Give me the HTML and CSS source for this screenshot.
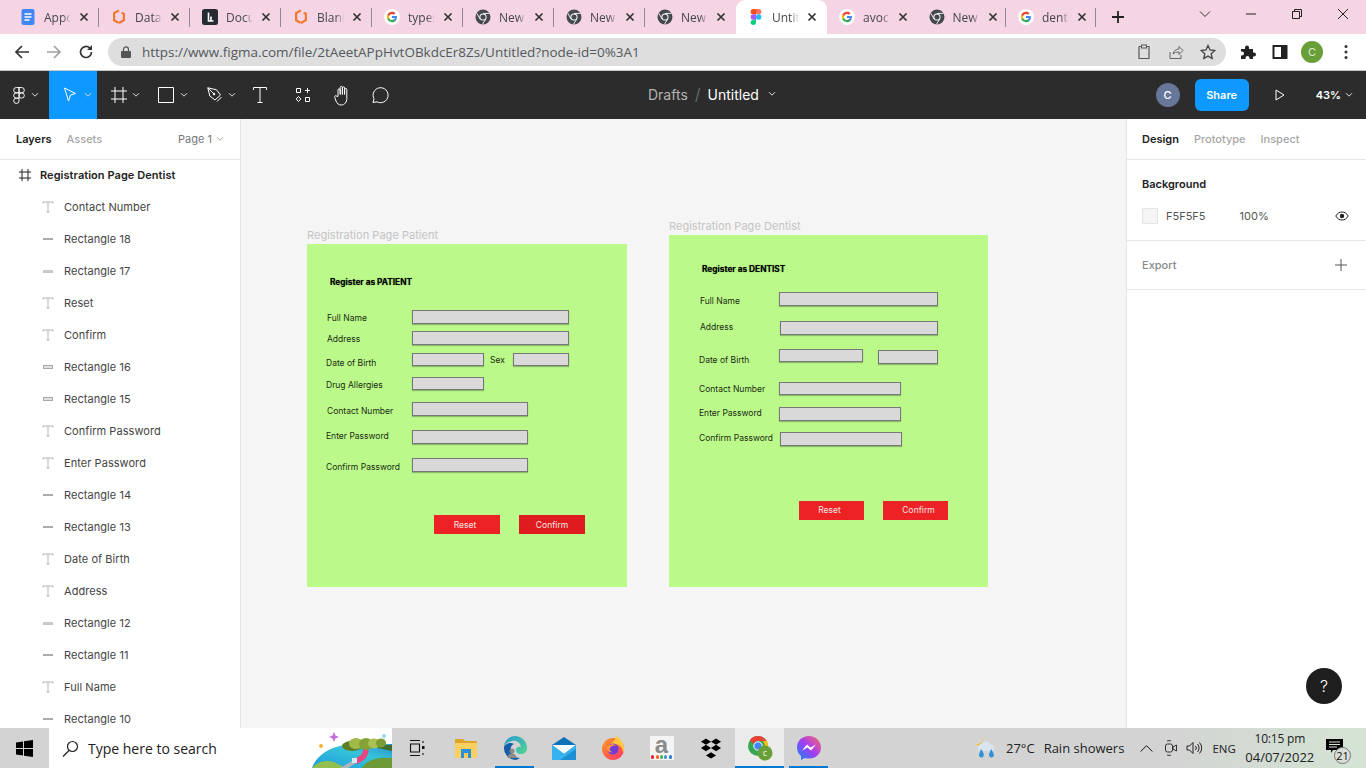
FILE: index.html
```html
<!DOCTYPE html>
<html lang="en">
<head>
    <meta charset="UTF-8">
    <title>Untitled – Figma</title>
    <link rel="stylesheet" href="styles.css">
</head>
<body>
    <svg class="icon-defs" width="0" height="0">
        <symbol id="i-close" viewBox="0 0 10 10"><path d="M1.5 1.5l7 7M8.5 1.5l-7 7" stroke="#333" stroke-width="1.7" fill="none"/></symbol>
        <symbol id="i-chev" viewBox="0 0 8 6"><path d="M1 1.2l3 3 3-3" stroke="currentColor" stroke-width="1" fill="none"/></symbol>
        <symbol id="i-google" viewBox="0 0 24 24">
            <circle cx="12" cy="12" r="12" fill="#fff"/>
            <g transform="translate(3.6 3.6) scale(.7)">
                <path fill="#4285f4" d="M22.56 12.25c0-.78-.07-1.53-.2-2.25H12v4.26h5.92c-.26 1.37-1.04 2.53-2.21 3.31v2.77h3.57c2.08-1.92 3.28-4.74 3.28-8.09z"/>
                <path fill="#34a853" d="M12 23c2.97 0 5.46-.98 7.28-2.66l-3.57-2.77c-.98.66-2.23 1.06-3.71 1.06-2.86 0-5.29-1.93-6.16-4.53H2.18v2.84C3.99 20.53 7.7 23 12 23z"/>
                <path fill="#fbbc05" d="M5.84 14.09c-.22-.66-.35-1.36-.35-2.09s.13-1.43.35-2.09V7.07H2.18C1.43 8.55 1 10.22 1 12s.43 3.45 1.18 4.93l3.66-2.84z"/>
                <path fill="#ea4335" d="M12 5.38c1.62 0 3.06.56 4.21 1.64l3.15-3.15C17.45 2.09 14.97 1 12 1 7.7 1 3.99 3.47 2.18 7.07l3.66 2.84c.87-2.6 3.3-4.53 6.16-4.53z"/>
            </g>
        </symbol>
        <symbol id="i-chromium" viewBox="0 0 16 16">
            <circle cx="8" cy="8" r="7.5" fill="#45484c"/>
            <circle cx="8" cy="8" r="3.6" fill="#fff"/>
            <circle cx="8" cy="8" r="2.6" fill="#45484c"/>
            <path d="M8 4.4h6.4M5 10l-3-5.6M10.6 10.4l-3.2 5" stroke="#fff" stroke-width=".9"/>
        </symbol>
        <symbol id="i-hex" viewBox="0 0 16 18">
            <path d="M8 1.500L2.500 4.700v8l5 3M8 15.700l5.500-3.200V5.500L11 4" stroke="#f4752b" stroke-width="2.400" fill="none"/>
        </symbol>
        <symbol id="i-t" viewBox="0 0 12 12"><path d="M1 2.400V1h10v1.400M6 1v10M4.400 11h3.200" stroke="#b3b3b3" stroke-width="1" fill="none"/></symbol>
    </svg>

    <!-- browser tabs -->
    <div class="tab-strip">
        <div class="tab">
            <svg class="fav" viewBox="0 0 16 16"><rect x="1.500" width="13" height="16" rx="2" fill="#4285f4"/><path d="M4.500 5h7M4.500 8h7M4.500 11h5" stroke="#fff" stroke-width="1.400"/></svg>
            <span class="tab-title">Appo</span><svg class="tab-x"><use href="#i-close"/></svg>
        </div>
        <div class="tab">
            <svg class="fav"><use href="#i-hex"/></svg>
            <span class="tab-title">Data</span><svg class="tab-x"><use href="#i-close"/></svg>
        </div>
        <div class="tab">
            <svg class="fav" viewBox="0 0 16 16"><rect width="16" height="16" rx="2.500" fill="#262a33"/><path d="M6.500 3.500v8.500h5M9 7.500v4.500" stroke="#fff" stroke-width="1.600" fill="none"/></svg>
            <span class="tab-title">Docu</span><svg class="tab-x"><use href="#i-close"/></svg>
        </div>
        <div class="tab">
            <svg class="fav"><use href="#i-hex"/></svg>
            <span class="tab-title">Blank</span><svg class="tab-x"><use href="#i-close"/></svg>
        </div>
        <div class="tab">
            <svg class="fav"><use href="#i-google"/></svg>
            <span class="tab-title">types</span><svg class="tab-x"><use href="#i-close"/></svg>
        </div>
        <div class="tab">
            <svg class="fav"><use href="#i-chromium"/></svg>
            <span class="tab-title">New</span><svg class="tab-x"><use href="#i-close"/></svg>
        </div>
        <div class="tab">
            <svg class="fav"><use href="#i-chromium"/></svg>
            <span class="tab-title">New</span><svg class="tab-x"><use href="#i-close"/></svg>
        </div>
        <div class="tab tab-before-active">
            <svg class="fav"><use href="#i-chromium"/></svg>
            <span class="tab-title">New</span><svg class="tab-x"><use href="#i-close"/></svg>
        </div>
        <div class="tab tab-active">
            <svg class="fav" viewBox="0 0 16 24">
                <path fill="#f24e1e" d="M4 0h4v8H4a4 4 0 0 1 0-8z"/>
                <path fill="#ff7262" d="M8 0h4a4 4 0 0 1 0 8H8z"/>
                <path fill="#a259ff" d="M4 8h4v8H4a4 4 0 0 1 0-8z"/>
                <circle fill="#1abcfe" cx="12" cy="12" r="4"/>
                <path fill="#0acf83" d="M4 16h4v4a4 4 0 1 1-4-4z"/>
            </svg>
            <span class="tab-title">Untit</span><svg class="tab-x"><use href="#i-close"/></svg>
        </div>
        <div class="tab tab-narrow">
            <svg class="fav"><use href="#i-google"/></svg>
            <span class="tab-title">avoc</span><svg class="tab-x"><use href="#i-close"/></svg>
        </div>
        <div class="tab tab-narrow">
            <svg class="fav"><use href="#i-chromium"/></svg>
            <span class="tab-title">New</span><svg class="tab-x"><use href="#i-close"/></svg>
        </div>
        <div class="tab tab-narrow">
            <svg class="fav"><use href="#i-google"/></svg>
            <span class="tab-title">denti</span><svg class="tab-x"><use href="#i-close"/></svg>
        </div>
        <svg class="new-tab" viewBox="0 0 14 14"><path d="M7 1v12M1 7h12" stroke="#222" stroke-width="1.800"/></svg>
        <div class="win-controls">
            <svg viewBox="0 0 12 12"><path d="M1 3.500l5 5 5-5" stroke="#333" fill="none"/></svg>
            <svg viewBox="0 0 12 12"><path d="M1 6h10" stroke="#222"/></svg>
            <svg viewBox="0 0 12 12"><path d="M1.500 3.500h7v7h-7zM3.500 3.500v-2h7v7h-2" stroke="#222" fill="none"/></svg>
            <svg viewBox="0 0 12 12"><path d="M1 1l10 10M11 1L1 11" stroke="#222" fill="none"/></svg>
        </div>
    </div>

    <!-- address bar -->
    <div class="nav-bar">
        <svg class="nav-btn" viewBox="0 0 16 16"><path d="M15 8H2M8 2L2 8l6 6" stroke="#333" stroke-width="1.700" fill="none"/></svg>
        <svg class="nav-btn" viewBox="0 0 16 16"><path d="M1 8h13M8 2l6 6-6 6" stroke="#a0a0a0" stroke-width="1.700" fill="none"/></svg>
        <svg class="nav-btn" viewBox="0 0 16 16"><path d="M13.500 8A5.500 5.500 0 1 1 11.800 4" stroke="#333" stroke-width="1.700" fill="none"/><path d="M14 1v5H9z" fill="#333"/></svg>
        <div class="omnibox">
            <svg class="lock" viewBox="0 0 10 12"><path d="M2.500 5V3.400a2.500 2.500 0 0 1 5 0V5" stroke="#555" stroke-width="1.200" fill="none"/><rect y="5" width="10" height="7" rx="1" fill="#555"/></svg>
            <span class="url">https://www.figma.com/file/2tAeetAPpHvtOBkdcEr8Zs/Untitled?node-id=0%3A1</span>
            <svg class="omni-icon" viewBox="0 0 16 16"><path d="M3 2.500h2.500M10.500 2.500H13v12H3v-12" stroke="#555" stroke-width="1.200" fill="none"/><rect x="5.500" y="1" width="5" height="3" fill="#dedede" stroke="#555"/></svg>
            <svg class="omni-icon" viewBox="0 0 16 16"><path d="M2 8v6.500h11V11M5 10c.5-3 3-5 6-5V2.500L15 6.500l-4 4V8c-2.500 0-4.500.5-6 2z" stroke="#666" fill="none"/></svg>
            <svg class="omni-icon omni-star" viewBox="0 0 16 16"><path d="M8 1.500l2 4.500 4.800.5-3.600 3.200 1 4.800L8 12.100l-4.200 2.400 1-4.800L1.200 6.500 6 6z" stroke="#444" stroke-width="1.300" fill="none"/></svg>
        </div>
        <svg class="ext-icon" viewBox="0 0 16 16"><path d="M1 5h4V3.500a2 2 0 0 1 4 0V5h4v3.500h1a2 2 0 0 1 0 4h-1V15H9.500v-1a2 2 0 0 0-4 0v1H1v-3.500h1a2 2 0 0 0 0-4H1z" fill="#222"/></svg>
        <svg class="ext-icon ext-panel" viewBox="0 0 16 16"><path d="M1.500 2h13v12h-13z" fill="none" stroke="#222" stroke-width="2"/><path d="M9 2h6v12H9z" fill="#222"/></svg>
        <span class="chrome-avatar">C</span>
        <svg class="chrome-menu" viewBox="0 0 4 16"><circle cx="2" cy="2.500" r="1.500"/><circle cx="2" cy="8" r="1.500"/><circle cx="2" cy="13.500" r="1.500"/></svg>
    </div>

    <!-- figma toolbar -->
    <header class="fig-toolbar">
        <div class="tool tool-menu">
            <svg width="12" height="17" viewBox="0 0 11 16"><g fill="none" stroke="#fff" stroke-width=".9"><path d="M3 .5h2.500v5H3a2.500 2.500 0 0 1 0-5zM5.500 .5H8a2.500 2.500 0 0 1 0 5H5.500zM3 5.500h2.500v5H3a2.500 2.500 0 0 1 0-5z"/><circle cx="8" cy="8" r="2.500"/><path d="M3 10.500h2.500V13A2.500 2.500 0 1 1 3 10.500z"/></g></svg>
            <svg class="t-chev"><use href="#i-chev"/></svg>
        </div>
        <div class="tool tool-select">
            <svg width="14" height="16" viewBox="0 0 14 16"><path d="M1.500 1l11 5.500-5 1.500-2 6z" fill="none" stroke="#fff"/></svg>
            <svg class="t-chev"><use href="#i-chev"/></svg>
        </div>
        <div class="tool tool-frame">
            <svg width="16" height="16" viewBox="0 0 16 16"><path d="M4 0v16M12 0v16M0 4h16M0 12h16" stroke="#fff" fill="none"/></svg>
            <svg class="t-chev"><use href="#i-chev"/></svg>
        </div>
        <div class="tool tool-rect">
            <svg width="16" height="16" viewBox="0 0 16 16"><path d="M.5 .5h15v15H.5z" stroke="#fff" fill="none"/></svg>
            <svg class="t-chev"><use href="#i-chev"/></svg>
        </div>
        <div class="tool tool-pen">
            <svg width="16" height="16" viewBox="0 0 16 16"><path d="M.8 .8l8.700 2 4 5.200-5.500 5-5.200-4zM.8 .8l5.500 5.500M10 14.500l4.500-4.500" stroke="#fff" fill="none"/><circle cx="7" cy="7" r="1.200" fill="#fff"/></svg>
            <svg class="t-chev"><use href="#i-chev"/></svg>
        </div>
        <div class="tool tool-single tool-text">
            <svg width="14" height="16" viewBox="0 0 14 16"><path d="M.5 3V.5h13V3M7 .5v15M4.500 15.500h5" stroke="#fff" fill="none"/></svg>
        </div>
        <div class="tool tool-single tool-res">
            <svg width="14" height="14" viewBox="0 0 14 14"><path d="M.5 .5h4v4h-4zM9.500 9.500h4v4h-4zM11.500 0v5M9 2.500h5M2.500 8.500l2.300 2.500-2.300 2.500L.2 11z" stroke="#fff" fill="none"/></svg>
        </div>
        <div class="tool tool-single tool-hand">
            <svg width="18" height="21" viewBox="0 0 18 20"><path d="M4 11V4.500a1 1 0 0 1 2.200 0V9 2a1 1 0 0 1 2.200 0v7-6.500a1 1 0 0 1 2.200 0V9 4a1 1 0 0 1 2.200 0v9c0 3.500-2 6.500-5.500 6.500-3 0-4-1.500-5.300-4L.8 12c-.7-1.500 1-2.500 2-1.300z" stroke="#fff" fill="none"/></svg>
        </div>
        <div class="tool tool-single tool-comment">
            <svg width="18" height="18" viewBox="0 0 18 18"><path d="M2 16.500l1-3.700A7.500 7.500 0 1 1 6 15.800z" stroke="#fff" fill="none"/></svg>
        </div>
        <div class="doc-title">
            <span class="doc-folder">Drafts</span><span class="doc-slash">/</span><span class="doc-name">Untitled</span>
            <svg class="t-chev"><use href="#i-chev"/></svg>
        </div>
        <span class="fig-avatar">C</span>
        <button class="share-btn">Share</button>
        <svg class="play-btn" width="10" height="12" viewBox="0 0 10 12"><path d="M1 1l8 5-8 5z" stroke="#fff" fill="none"/></svg>
        <span class="zoom-val">43%</span>
        <svg class="t-chev zoom-chev"><use href="#i-chev"/></svg>
    </header>

    <div class="workspace">
        <!-- layers panel -->
        <aside class="left-panel">
            <div class="panel-tabs">
                <span class="ptab ptab-on">Layers</span>
                <span class="ptab">Assets</span>
                <span class="page-pick">Page 1<svg><use href="#i-chev"/></svg></span>
            </div>
            <div class="layer layer-frame">
                <svg width="12" height="12" viewBox="0 0 12 12"><path d="M3 0v12M9 0v12M0 3h12M0 9h12" stroke="#222" fill="none"/></svg>
                <span>Registration Page Dentist</span>
            </div>
            <div class="layer"><svg class="l-ic"><use href="#i-t"/></svg><span>Contact Number</span></div>
            <div class="layer"><i class="shape s-line"></i><span>Rectangle 18</span></div>
            <div class="layer"><i class="shape s-thick"></i><span>Rectangle 17</span></div>
            <div class="layer"><svg class="l-ic"><use href="#i-t"/></svg><span>Reset</span></div>
            <div class="layer"><svg class="l-ic"><use href="#i-t"/></svg><span>Confirm</span></div>
            <div class="layer"><i class="shape s-box"></i><span>Rectangle 16</span></div>
            <div class="layer"><i class="shape s-box"></i><span>Rectangle 15</span></div>
            <div class="layer"><svg class="l-ic"><use href="#i-t"/></svg><span>Confirm Password</span></div>
            <div class="layer"><svg class="l-ic"><use href="#i-t"/></svg><span>Enter Password</span></div>
            <div class="layer"><i class="shape s-line"></i><span>Rectangle 14</span></div>
            <div class="layer"><i class="shape s-line"></i><span>Rectangle 13</span></div>
            <div class="layer"><svg class="l-ic"><use href="#i-t"/></svg><span>Date of Birth</span></div>
            <div class="layer"><svg class="l-ic"><use href="#i-t"/></svg><span>Address</span></div>
            <div class="layer"><i class="shape s-thick"></i><span>Rectangle 12</span></div>
            <div class="layer"><i class="shape s-line"></i><span>Rectangle 11</span></div>
            <div class="layer"><svg class="l-ic"><use href="#i-t"/></svg><span>Full Name</span></div>
            <div class="layer"><i class="shape s-line"></i><span>Rectangle 10</span></div>
        </aside>

        <!-- canvas, frames sit at their free positions -->
        <main class="canvas">
            <div class="frame-label patient-label">Registration Page Patient</div>
            <section class="frame patient">
                <div class="frm-head ph">Register as PATIENT</div>
                <div class="frm-text p1">Full Name</div><div class="fld pf1"></div>
                <div class="frm-text p2">Address</div><div class="fld pf2"></div>
                <div class="frm-text p3">Date of Birth</div><div class="fld pf3"></div>
                <div class="frm-text p4">Sex</div><div class="fld pf4"></div>
                <div class="frm-text p5">Drug Allergies</div><div class="fld pf5"></div>
                <div class="frm-text p6">Contact Number</div><div class="fld pf6"></div>
                <div class="frm-text p7">Enter Password</div><div class="fld pf7"></div>
                <div class="frm-text p8">Confirm Password</div><div class="fld pf8"></div>
                <div class="frm-btn pb1">Reset</div>
                <div class="frm-btn pb2">Confirm</div>
            </section>

            <div class="frame-label dentist-label">Registration Page Dentist</div>
            <section class="frame dentist">
                <div class="frm-head dh">Register as DENTIST</div>
                <div class="frm-text d1">Full Name</div><div class="fld df1"></div>
                <div class="frm-text d2">Address</div><div class="fld df2"></div>
                <div class="frm-text d3">Date of Birth</div><div class="fld df3"></div><div class="fld df4"></div>
                <div class="frm-text d5">Contact Number</div><div class="fld df5"></div>
                <div class="frm-text d6">Enter Password</div><div class="fld df6"></div>
                <div class="frm-text d7">Confirm Password</div><div class="fld df7"></div>
                <div class="frm-btn db1">Reset</div>
                <div class="frm-btn db2">Confirm</div>
            </section>

            <div class="help-btn">?</div>
        </main>

        <!-- design panel -->
        <aside class="right-panel">
            <div class="panel-tabs">
                <span class="ptab ptab-on">Design</span>
                <span class="ptab">Prototype</span>
                <span class="ptab">Inspect</span>
            </div>
            <div class="bg-section">
                <div class="sec-title">Background</div>
                <div class="bg-row">
                    <i class="swatch"></i>
                    <span class="bg-hex">F5F5F5</span>
                    <span class="bg-pct">100%</span>
                    <svg class="eye" width="14" height="10" viewBox="0 0 14 10"><path d="M.8 5C2.500 2 4.500 1 7 1s4.500 1 6.200 4C11.500 8 9.500 9 7 9S2.500 8 .8 5z" stroke="#222" fill="none"/><circle cx="7" cy="5" r="2.200" fill="#222"/></svg>
                </div>
            </div>
            <div class="export-section">
                <span>Export</span>
                <svg width="12" height="12" viewBox="0 0 12 12"><path d="M6 0v12M0 6h12" stroke="#555" fill="none"/></svg>
            </div>
        </aside>
    </div>

    <!-- windows taskbar -->
    <footer class="taskbar">
        <div class="start">
            <svg width="17" height="17" viewBox="0 0 17 17"><path d="M0 2.400L7 1.400V8H0zM8 1.200L17 0v8H8zM0 9h7v6.600l-7-1zM8 9h9v8l-9-1.200z" fill="#000"/></svg>
        </div>
        <div class="search-box">
            <svg width="17" height="17" viewBox="0 0 17 17"><circle cx="10.500" cy="6.500" r="5" fill="none" stroke="#222" stroke-width="1.200"/><path d="M7 10.500L1 16.500" stroke="#222" stroke-width="1.200"/></svg>
            <span>Type here to search</span>
            <svg class="search-art" width="80" height="40" viewBox="0 0 80 40">
                <defs><linearGradient id="sea" x1="0" y1="1" x2="1" y2="0"><stop offset="0" stop-color="#1f9be0"/><stop offset=".6" stop-color="#35c4d8"/><stop offset="1" stop-color="#2a8fd0"/></linearGradient></defs>
                <path d="M0 40C4 28 16 20 32 17l48-1v24z" fill="url(#sea)"/>
                <path d="M0 40c6-7 14-8 22-6l12 6z" fill="#93bf4f"/>
                <path d="M50 40c4-8 16-11 30-10v10z" fill="#6d9936"/>
                <path d="M28 40l14-8 2 3-8 5z" fill="#aeb5bb"/>
                <path d="M40 31c8-1 12-6 11-12l5 0c2 8-3 14-12 17z" fill="#e8467f"/>
                <rect x="40" y="30" width="5" height="5" fill="#d7e7f2"/>
                <path d="M66 17h14v6l-14-3z" fill="#3f6e2c"/>
                <ellipse cx="40" cy="18" rx="10" ry="5" fill="#5f7f26"/>
                <ellipse cx="44" cy="15.500" rx="7" ry="5.500" fill="#a0bb4a"/>
                <ellipse cx="54" cy="16" rx="7" ry="6" fill="#86a236"/>
                <ellipse cx="62" cy="15.500" rx="6" ry="5" fill="#a8c152"/>
                <ellipse cx="69" cy="15" rx="5" ry="4.500" fill="#7d9c33"/>
                <path d="M22 4l1.500 3.500 3.500 1.500-3.500 1.500L22 14l-1.500-3.500L17 9l3.500-1.500z" fill="#c86ed8"/>
                <circle cx="9" cy="18" r="1.900" fill="#f6ad2b"/>
                <circle cx="72" cy="8" r="1.900" fill="#7fe0ee"/>
            </svg>
        </div>
        <div class="task-app">
            <svg width="16" height="16" viewBox="0 0 16 16"><path d="M1 .5h10M1 15.500h10M1.500 4h9v8h-9zM14 1v2M14 13v2" stroke="#111" stroke-width="1.100" fill="none"/><rect x="13" y="6" width="2.500" height="3" fill="#111"/></svg>
        </div>
        <div class="task-app">
            <svg width="22" height="19" viewBox="0 0 22 19"><path d="M0 1a1 1 0 0 1 1-1h7l2 2h11a1 1 0 0 1 1 1v2H0z" fill="#e0a526"/><rect y="4" width="22" height="15" rx="1" fill="#f9cf60"/><rect x="6" y="10" width="10" height="9" fill="#2a8fd8"/><rect x="9" y="14" width="4" height="5" fill="#f9cf60"/></svg>
        </div>
        <div class="task-app task-open">
            <svg width="24" height="24" viewBox="0 0 24 24"><defs><linearGradient id="edgeTop" x1="0" y1="0" x2="1" y2="1"><stop offset="0" stop-color="#2c9ad6"/><stop offset="1" stop-color="#4fd88f"/></linearGradient></defs><path d="M12 0a12 12 0 0 1 12 12c0 4-3 6-6 6-4 0-5-2-5-4 0-3 3-4 5-3C17 6 13 4 9 5 5 6 2 8 1 11 1 5 6 0 12 0z" fill="url(#edgeTop)"/><path d="M1 11c2-4 7-5 10-3-3 1-4 4-3 8 1 3 4 6 9 6-2 1-3 2-5 2A12 12 0 0 1 1 11z" fill="#145ea8"/><circle cx="9" cy="15" r="2.500" fill="#8a8a8a"/><path d="M4.500 22c0-3 2-4.500 4.500-4.500s4.500 1.500 4.500 4.500z" fill="#8a8a8a"/></svg>
        </div>
        <div class="task-app">
            <svg width="24" height="23" viewBox="0 0 24 23"><path d="M0 8L12 0l12 8v15H0z" fill="#0f72b8"/><path d="M0 8h24L12 17z" fill="#f3fbff"/><path d="M0 8l12 9 12-9v15H0z" fill="#35b3ee"/><path d="M24 23H8l16-11z" fill="#1e8fd2"/></svg>
        </div>
        <div class="task-app">
            <svg width="24" height="24" viewBox="0 0 24 24"><defs><linearGradient id="fox" x1="0" y1="0" x2="1" y2="1"><stop offset="0" stop-color="#ff9a1e"/><stop offset="1" stop-color="#ff2f6e"/></linearGradient></defs><circle cx="12" cy="13" r="11" fill="url(#fox)"/><path d="M15 0c4 2 8 7 8 12 0 2 0 4-1 5 0-5-3-8-7-9-2-.5-4 0-6 0 2-1 5-3 6-8z" fill="#ffc93d"/><circle cx="12" cy="13" r="5.500" fill="#6e3bd8"/><path d="M6 11c2-3 7-4 10-1-3-1-6 0-7 2s1 4 3 4c-3 1-7-1-6-5z" fill="#ff9640"/></svg>
        </div>
        <div class="task-app">
            <span class="amazon-a">a</span>
            <span class="amazon-dots"><i></i><i></i><i></i><i></i><i></i></span>
        </div>
        <div class="task-app">
            <svg width="22" height="21" viewBox="0 0 24 22"><path d="M6.500 0L12 3.500 6.500 7 1 3.500zM17.500 0L23 3.500 17.500 7 12 3.500zM6.500 7L12 10.500 6.500 14 1 10.500zM17.500 7L23 10.500 17.500 14 12 10.500zM12 15l5.500 3.500L12 22l-5.500-3.500z" fill="#000"/></svg>
        </div>
        <div class="task-app task-open task-active">
            <svg width="26" height="26" viewBox="0 0 26 26">
                <circle cx="11" cy="11" r="10" fill="#34a853"/>
                <path d="M11 1a10 10 0 0 1 8.700 5H11a5 5 0 0 0-4.600 3L2.800 5.200A10 10 0 0 1 11 1z" fill="#ea4335"/>
                <path d="M19.700 6a10 10 0 0 1-8 15l3.900-7a5 5 0 0 0 0-8z" fill="#fbbc05"/>
                <circle cx="11" cy="11" r="4.200" fill="#4285f4" stroke="#fff"/>
                <circle cx="18" cy="18" r="7.500" fill="#689f38"/>
                <text x="18" y="21" class="badge-c">c</text>
            </svg>
        </div>
        <div class="task-app task-open">
            <svg width="24" height="24" viewBox="0 0 24 24"><defs><linearGradient id="msg" x1="0" y1="1" x2="1" y2="0"><stop offset="0" stop-color="#0a8dff"/><stop offset=".5" stop-color="#a33bf2"/><stop offset="1" stop-color="#ff6a68"/></linearGradient></defs><path d="M12 0C5 0 0 5 0 11.500c0 3.500 1.500 6.500 4 8.500v4l3.700-2c1.300.4 2.800.6 4.300.6 7 0 12-5 12-11.100S19 0 12 0z" fill="url(#msg)"/><path d="M5 14.500l5-6 3.500 3L19 8.500l-5 6-3.500-3z" fill="#fff"/></svg>
        </div>
        <div class="tray">
            <svg class="weather" width="22" height="24" viewBox="0 0 22 24"><path d="M8 1a6 6 0 0 0 2 8 6 6 0 0 1-9-1 6 6 0 0 0 7-7z" fill="#f6c02c"/><path d="M4 15a4 4 0 0 1 2-7 5 5 0 0 1 9 0 4 4 0 0 1 3 7H6z" fill="#d8e4ee"/><path d="M6 13c2 3 3.500 5 2.500 7.500-2 2-5 .5-4.500-2zM16 13c2 3 3.500 5 2.500 7.500-2 2-5 .5-4.500-2z" fill="#2f8fd8"/></svg>
            <span class="temp">27°C</span>
            <span class="rain">Rain showers</span>
            <svg class="tray-up" width="13" height="7" viewBox="0 0 13 7"><path d="M.7 6.500l5.800-5.800 5.800 5.800" stroke="#111" fill="none"/></svg>
            <svg class="tray-cam" width="12" height="16" viewBox="0 0 12 16"><path d="M2 1c1-.5 3-.5 4 0M2 15c1 .5 3 .5 4 0" stroke="#333" fill="none"/><rect x=".5" y="4" width="7" height="8" rx="2" fill="none" stroke="#333"/><path d="M8 7l3.500-2v6L8 9z" fill="none" stroke="#333"/></svg>
            <svg class="tray-vol" width="16" height="14" viewBox="0 0 16 14"><path d="M1 5h2.500L7 1.500v11L3.500 9H1zM9.500 5a3 3 0 0 1 0 4M11.500 3a6 6 0 0 1 0 8M13.500 1.500a8 8 0 0 1 0 11" stroke="#222" fill="none"/></svg>
            <span class="lang">ENG</span>
            <div class="clock"><span class="clock-time">10:15 pm</span><span>04/07/2022</span></div>
            <div class="notif">
                <svg width="17" height="14" viewBox="0 0 17 14"><path d="M0 0h17v11H7l-2 3v-3H0z" fill="#000"/><path d="M3 3h11M3 5.500h11M3 8h8" stroke="#d5e2d5"/></svg>
                <span class="notif-count">21</span>
            </div>
        </div>
    </footer>
</body>
</html>
```

FILE: styles.css
```css
* {
    box-sizing: border-box;
}
html, body {
    height: 100%;
}
body {
    margin: 0;
    width: 1366px;
    height: 768px;
    overflow: hidden;
    display: flex;
    flex-direction: column;
    font-family: "Inter", "Liberation Sans", sans-serif;
    background: #fff;
}
.icon-defs {
    display: none;
}

/* chrome tabs */
.tab-strip {
    height: 34px;
    flex: none;
    display: flex;
    align-items: center;
    padding-left: 8px;
    background: #f5d4e4;
    font-family: "Open Sans", "Liberation Sans", sans-serif;
}
.tab {
    width: 91px;
    height: 34px;
    flex: none;
    display: flex;
    align-items: center;
    padding-left: 12px;
    position: relative;
}
.tab-narrow {
    width: 89.500px;
}
.tab::after {
    content: "";
    position: absolute;
    right: 0;
    top: 8px;
    height: 19px;
    border-right: 1px solid #8f8a8d;
}
.tab-before-active::after,
.tab-active::after {
    display: none;
}
.tab-active {
    background: #fff;
    border-radius: 9px 9px 0 0;
}
.tab-active + .tab::after {
    display: none;
}
.fav {
    width: 16px;
    height: 16px;
    flex: none;
}
.tab-title {
    width: 27px;
    margin-left: 8px;
    font-size: 12px;
    color: #45474a;
    white-space: nowrap;
    -webkit-mask-image: linear-gradient(to right, #000 70%, transparent);
    mask-image: linear-gradient(to right, #000 70%, transparent);
}
.tab-x {
    width: 10px;
    height: 10px;
    margin-left: 8px;
    flex: none;
}
.new-tab {
    width: 14px;
    height: 14px;
    margin-left: 15px;
    flex: none;
}
.win-controls {
    margin-left: auto;
    display: flex;
    width: 184px;
    padding-bottom: 6px;
}
.win-controls svg {
    width: 12px;
    height: 12px;
    margin: 0 17px;
}

/* chrome address bar */
.nav-bar {
    height: 37px;
    flex: none;
    display: flex;
    align-items: center;
    background: #fff;
    border-bottom: 1px solid #c8c8c8;
    padding-left: 14px;
}
.nav-btn {
    width: 16px;
    height: 16px;
    margin-right: 16px;
    flex: none;
}
.omnibox {
    width: 1118px;
    height: 28px;
    margin-left: -2px;
    border-radius: 14px;
    background: #dedede;
    display: flex;
    align-items: center;
    padding-left: 13px;
}
.lock {
    width: 10px;
    height: 12px;
    flex: none;
}
.url {
    margin-left: 11px;
    font-size: 13.500px;
    letter-spacing: -.02px;
    color: #55585c;
    font-family: "Open Sans", "Liberation Sans", sans-serif;
    white-space: nowrap;
    width: 994px;
    flex: none;
}
.omni-icon {
    width: 16px;
    height: 16px;
    margin-right: 16px;
    flex: none;
}
.omni-star {
    margin-right: 0;
}
.ext-icon {
    width: 16px;
    height: 16px;
    margin-left: 14px;
    flex: none;
}
.ext-panel {
    margin-left: 16px;
}
.chrome-avatar {
    width: 22px;
    height: 22px;
    margin-left: 13px;
    border-radius: 50%;
    background: #689f38;
    color: #dfe9d5;
    font-size: 11px;
    text-align: center;
    line-height: 22px;
    flex: none;
}
.chrome-menu {
    width: 4px;
    height: 16px;
    margin-left: 21px;
    fill: #333;
    flex: none;
}

/* figma toolbar */
.fig-toolbar {
    height: 48px;
    flex: none;
    display: flex;
    align-items: center;
    background: #2c2c2c;
    color: #fff;
    position: relative;
}
.tool {
    height: 48px;
    display: flex;
    align-items: center;
    flex: none;
    padding-left: 14px;
}
.t-chev {
    width: 8px;
    height: 6px;
    color: #ddd;
    flex: none;
    margin-left: 5px;
}
.tool-menu {
    width: 49px;
    padding-left: 13px;
}
.tool-menu .t-chev {
    margin-left: 6px;
}
.tool-select {
    width: 48px;
    background: #0d99ff;
}
.tool-select .t-chev {
    margin-left: 7px;
}
.tool-frame {
    width: 47px;
}
.tool-rect {
    width: 47px;
}
.tool-rect .t-chev {
    margin-left: 6px;
}
.tool-pen {
    width: 47px;
    padding-left: 16px;
}
.tool-single {
    justify-content: center;
    padding-left: 0;
}
.tool-text {
    width: 36px;
    margin-left: 4px;
}
.tool-res {
    width: 48px;
    margin-left: 1px;
}
.tool-hand {
    width: 28px;
    margin-left: 2px;
}
.tool-comment {
    width: 50px;
    margin-left: -2px;
}
.doc-title {
    position: absolute;
    left: 648px;
    top: 0;
    height: 48px;
    padding-bottom: 2px;
    display: flex;
    align-items: center;
    font-size: 14px;
}
.doc-folder {
    color: #b3b3b3;
}
.doc-slash {
    color: #666;
    margin: 0 7px;
    font-size: 16px;
}
.doc-name {
    color: #fff;
}
.doc-title .t-chev {
    margin-left: 9px;
}
.fig-avatar {
    margin-left: auto;
    width: 24px;
    height: 24px;
    border-radius: 50%;
    background: #667799;
    text-align: center;
    line-height: 24px;
    font-size: 11px;
    font-weight: 500;
}
.share-btn {
    width: 54px;
    height: 32px;
    margin-left: 15px;
    border: none;
    border-radius: 6px;
    background: #0d99ff;
    color: #fff;
    font-family: inherit;
    font-size: 11px;
    font-weight: 600;
    padding: 0;
}
.play-btn {
    margin-left: 26px;
    flex: none;
}
.zoom-val {
    margin-left: 31px;
    font-size: 11px;
    font-weight: 600;
}
.zoom-chev {
    margin: 0 13px 0 4px;
}

/* main area */
.workspace {
    flex: 1;
    min-height: 0;
    display: flex;
    overflow: hidden;
}
.left-panel {
    width: 241px;
    flex: none;
    background: #fff;
    border-right: 1px solid #e5e5e5;
    overflow: hidden;
}
.panel-tabs {
    height: 41px;
    display: flex;
    align-items: center;
    gap: 15px;
    padding-left: 16px;
    border-bottom: 1px solid #e5e5e5;
    font-size: 11px;
}
.ptab {
    color: #a6a6a6;
    font-weight: 500;
}
.ptab-on {
    color: #222;
    font-weight: 600;
}
.page-pick {
    margin-left: auto;
    margin-right: 16px;
    color: #777;
    display: flex;
    align-items: center;
    gap: 4px;
}
.page-pick svg {
    width: 8px;
    height: 6px;
    color: #aaa;
}
.layer {
    height: 32px;
    display: flex;
    align-items: center;
    padding-left: 64px;
    font-size: 11px;
    letter-spacing: .005em;
    color: #444;
    position: relative;
}
.left-panel .layer:nth-child(2) {
    margin-top: -1px;
}
.layer-frame {
    padding-left: 40px;
    font-weight: 600;
    color: #222;
}
.layer-frame svg {
    position: absolute;
    left: 19px;
    top: 10px;
}
.l-ic {
    position: absolute;
    left: 42px;
    top: 10px;
    width: 12px;
    height: 12px;
}
.shape {
    position: absolute;
    left: 43px;
    top: 15px;
    width: 10px;
    background: #aaa;
}
.s-line {
    height: 1.500px;
}
.s-thick {
    height: 3px;
    background: #c9c9c9;
}
.s-box {
    top: 14px;
    height: 4px;
    background: #e3e3e3;
    border: 1px solid #a8a8a8;
}

/* canvas */
.canvas {
    flex: 1;
    position: relative;
    background: #f5f5f5;
}
.frame-label {
    position: absolute;
    font-size: 11px;
    letter-spacing: .003em;
    color: #c4c4c4;
    white-space: nowrap;
}
.patient-label {
    left: 66px;
    top: 109px;
}
.dentist-label {
    left: 428px;
    top: 100px;
}
.frame {
    position: absolute;
    background: #bbfa8a;
}
.patient {
    left: 66px;
    top: 125px;
    width: 320px;
    height: 343px;
}
.dentist {
    left: 428px;
    top: 116px;
    width: 319px;
    height: 352px;
}
.frm-head,
.frm-text {
    position: absolute;
    height: 12px;
    line-height: 12px;
    white-space: nowrap;
    color: #1c2a12;
    font-size: 8.500px;
}
.frm-head {
    font-weight: 700;
    font-size: 8.300px;
    color: #000;
    text-shadow: 0 0 1px rgba(0, 0, 0, .5);
}
.fld {
    position: absolute;
    background: #d9d9d9;
    border: 1px solid #777;
    box-shadow: 0 1px 1px rgba(0, 0, 0, .25);
}
.frm-btn {
    position: absolute;
    height: 19px;
    line-height: 19px;
    text-align: center;
    font-size: 8.500px;
    color: #f7e5e5;
    background: #ed2224;
}

/* patient frame contents */
.ph { left: 23px; top: 32px; }
.p1 { left: 20px; top: 68px; }
.p2 { left: 20px; top: 89px; }
.p3 { left: 19px; top: 113px; }
.p4 { left: 183px; top: 110px; }
.p5 { left: 19px; top: 135px; }
.p6 { left: 20px; top: 161px; }
.p7 { left: 19px; top: 186px; }
.p8 { left: 19px; top: 217px; }
.pf1 { left: 105px; top: 66px; width: 157px; height: 14px; }
.pf2 { left: 105px; top: 87px; width: 157px; height: 14px; }
.pf3 { left: 105px; top: 109px; width: 72px; height: 13px; }
.pf4 { left: 206px; top: 109px; width: 56px; height: 13px; }
.pf5 { left: 105px; top: 133px; width: 72px; height: 13px; }
.pf6 { left: 105px; top: 158px; width: 116px; height: 14px; }
.pf7 { left: 105px; top: 186px; width: 116px; height: 14px; }
.pf8 { left: 105px; top: 214px; width: 116px; height: 14px; }
.pb1 { left: 127px; top: 271px; width: 66px; padding-right: 4px; line-height: 20px; }
.pb2 { left: 212px; top: 271px; width: 66px; line-height: 20px; background: #de1b1e; }

/* dentist frame contents */
.dh { left: 33px; top: 28px; }
.d1 { left: 31px; top: 60px; }
.d2 { left: 31px; top: 86px; }
.d3 { left: 30px; top: 119px; }
.d5 { left: 30px; top: 148px; }
.d6 { left: 30px; top: 172px; }
.d7 { left: 30px; top: 197px; }
.df1 { left: 110px; top: 57px; width: 159px; height: 14px; }
.df2 { left: 111px; top: 86px; width: 158px; height: 14px; }
.df3 { left: 110px; top: 114px; width: 84px; height: 13px; }
.df4 { left: 209px; top: 115px; width: 60px; height: 14px; }
.df5 { left: 110px; top: 147px; width: 122px; height: 13px; }
.df6 { left: 110px; top: 172px; width: 122px; height: 14px; }
.df7 { left: 111px; top: 197px; width: 122px; height: 14px; }
.db1 { left: 130px; top: 266px; width: 65px; padding-right: 4px; }
.db2 { left: 214px; top: 266px; width: 65px; padding-left: 6px; }

.help-btn {
    position: absolute;
    left: 1065px;
    top: 549px;
    width: 36px;
    height: 36px;
    z-index: 2;
    border-radius: 50%;
    background: #1e1e1e;
    color: #fff;
    text-align: center;
    line-height: 36px;
    font-size: 16px;
    font-weight: 300;
}

/* design panel */
.right-panel {
    width: 240px;
    flex: none;
    background: #fff;
    border-left: 1px solid #e5e5e5;
}
.right-panel .panel-tabs {
    padding-left: 15px;
}
.bg-section {
    height: 81px;
    padding: 16px 16px 0 15px;
    border-bottom: 1px solid #e5e5e5;
}
.sec-title {
    font-size: 11px;
    font-weight: 600;
    color: #222;
    line-height: 16px;
}
.bg-row {
    display: flex;
    align-items: center;
    margin-top: 16px;
    font-size: 11px;
    color: #555;
}
.swatch {
    width: 16px;
    height: 16px;
    background: #f5f5f5;
    border: 1px solid #e5e5e5;
}
.bg-hex {
    margin-left: 8px;
}
.bg-pct {
    margin-left: 34px;
}
.eye {
    margin-left: auto;
    margin-right: 1px;
}
.export-section {
    height: 49px;
    display: flex;
    align-items: center;
    justify-content: space-between;
    padding: 0 19px 0 15px;
    border-bottom: 1px solid #e5e5e5;
    font-size: 11px;
    font-weight: 500;
    color: #8a8a8a;
}

/* windows taskbar */
.taskbar {
    height: 40px;
    flex: none;
    display: flex;
    background: linear-gradient(to right, #d3d3d3 0%, #d3d3d3 85%, #d4e4d4 100%);
    font-family: "Open Sans", "Liberation Sans", sans-serif;
    color: #222;
    position: relative;
    z-index: 3;
}
.start {
    width: 49px;
    display: flex;
    align-items: center;
    justify-content: center;
    padding-right: 1px;
}
.search-box {
    width: 343px;
    height: 40px;
    background: #fff;
    display: flex;
    align-items: center;
    padding-left: 13px;
    position: relative;
    font-size: 14px;
}
.search-box span {
    margin-left: 9px;
    margin-top: 1px;
}
.search-art {
    position: absolute;
    right: 0;
    bottom: 0;
}
.task-app {
    width: 49px;
    display: flex;
    flex-direction: column;
    align-items: center;
    justify-content: center;
    position: relative;
    flex: none;
}
.task-open::after {
    content: "";
    position: absolute;
    left: 5px;
    right: 5px;
    bottom: 0;
    height: 2px;
    background: #0078d4;
}
.task-active {
    background: #ebebeb;
}
.task-active::after {
    left: 0;
    right: 0;
}
.badge-c {
    font-size: 9px;
    fill: #e8f0e0;
    text-anchor: middle;
    font-family: "Open Sans", sans-serif;
}
.amazon-a {
    width: 24px;
    height: 18px;
    text-align: center;
    background: #f4f4f4;
    font-family: "Liberation Sans", sans-serif;
    font-size: 24px;
    font-weight: 700;
    line-height: 18px;
    color: #8a8a8a;
}
.amazon-dots {
    width: 24px;
    height: 6px;
    background: #f4f4f4;
    display: flex;
    justify-content: center;
    align-items: center;
    gap: 1.200px;
}
.amazon-dots i {
    width: 3.200px;
    height: 3.200px;
    border-radius: 50%;
    background: #e9241f;
}
.amazon-dots i:nth-child(2) { background: #f0652a; }
.amazon-dots i:nth-child(3) { background: #4bb54a; }
.amazon-dots i:nth-child(4) { background: #3d9bd8; }
.amazon-dots i:nth-child(5) { background: #2a7ad0; }
.tray {
    margin-left: auto;
    display: flex;
    align-items: center;
    font-size: 13px;
    width: 392px;
    position: relative;
}
.weather {
    margin-left: 1px;
    flex: none;
}
.temp {
    margin-left: 9px;
}
.rain {
    margin-left: 9px;
}
.tray-up {
    margin-left: 16px;
    flex: none;
}
.tray-cam {
    margin-left: 12px;
    flex: none;
}
.tray-vol {
    margin-left: 9px;
    flex: none;
}
.lang {
    margin-left: 10px;
    font-size: 11.500px;
}
.clock {
    margin-left: 13px;
    display: flex;
    flex-direction: column;
    align-items: center;
    font-size: 13px;
    line-height: 18px;
    width: 62px;
    white-space: nowrap;
    flex: none;
}
.clock-time {
    font-size: 12px;
    letter-spacing: -.2px;
}
.notif {
    position: absolute;
    right: 16px;
    top: 11px;
    width: 24px;
    height: 26px;
}
.notif-count {
    position: absolute;
    right: -1px;
    bottom: 1px;
    width: 17px;
    height: 17px;
    border-radius: 50%;
    background: #d8dfd8;
    border: 1px solid #777;
    text-align: center;
    font-size: 11px;
    line-height: 15px;
    color: #111;
}
```
